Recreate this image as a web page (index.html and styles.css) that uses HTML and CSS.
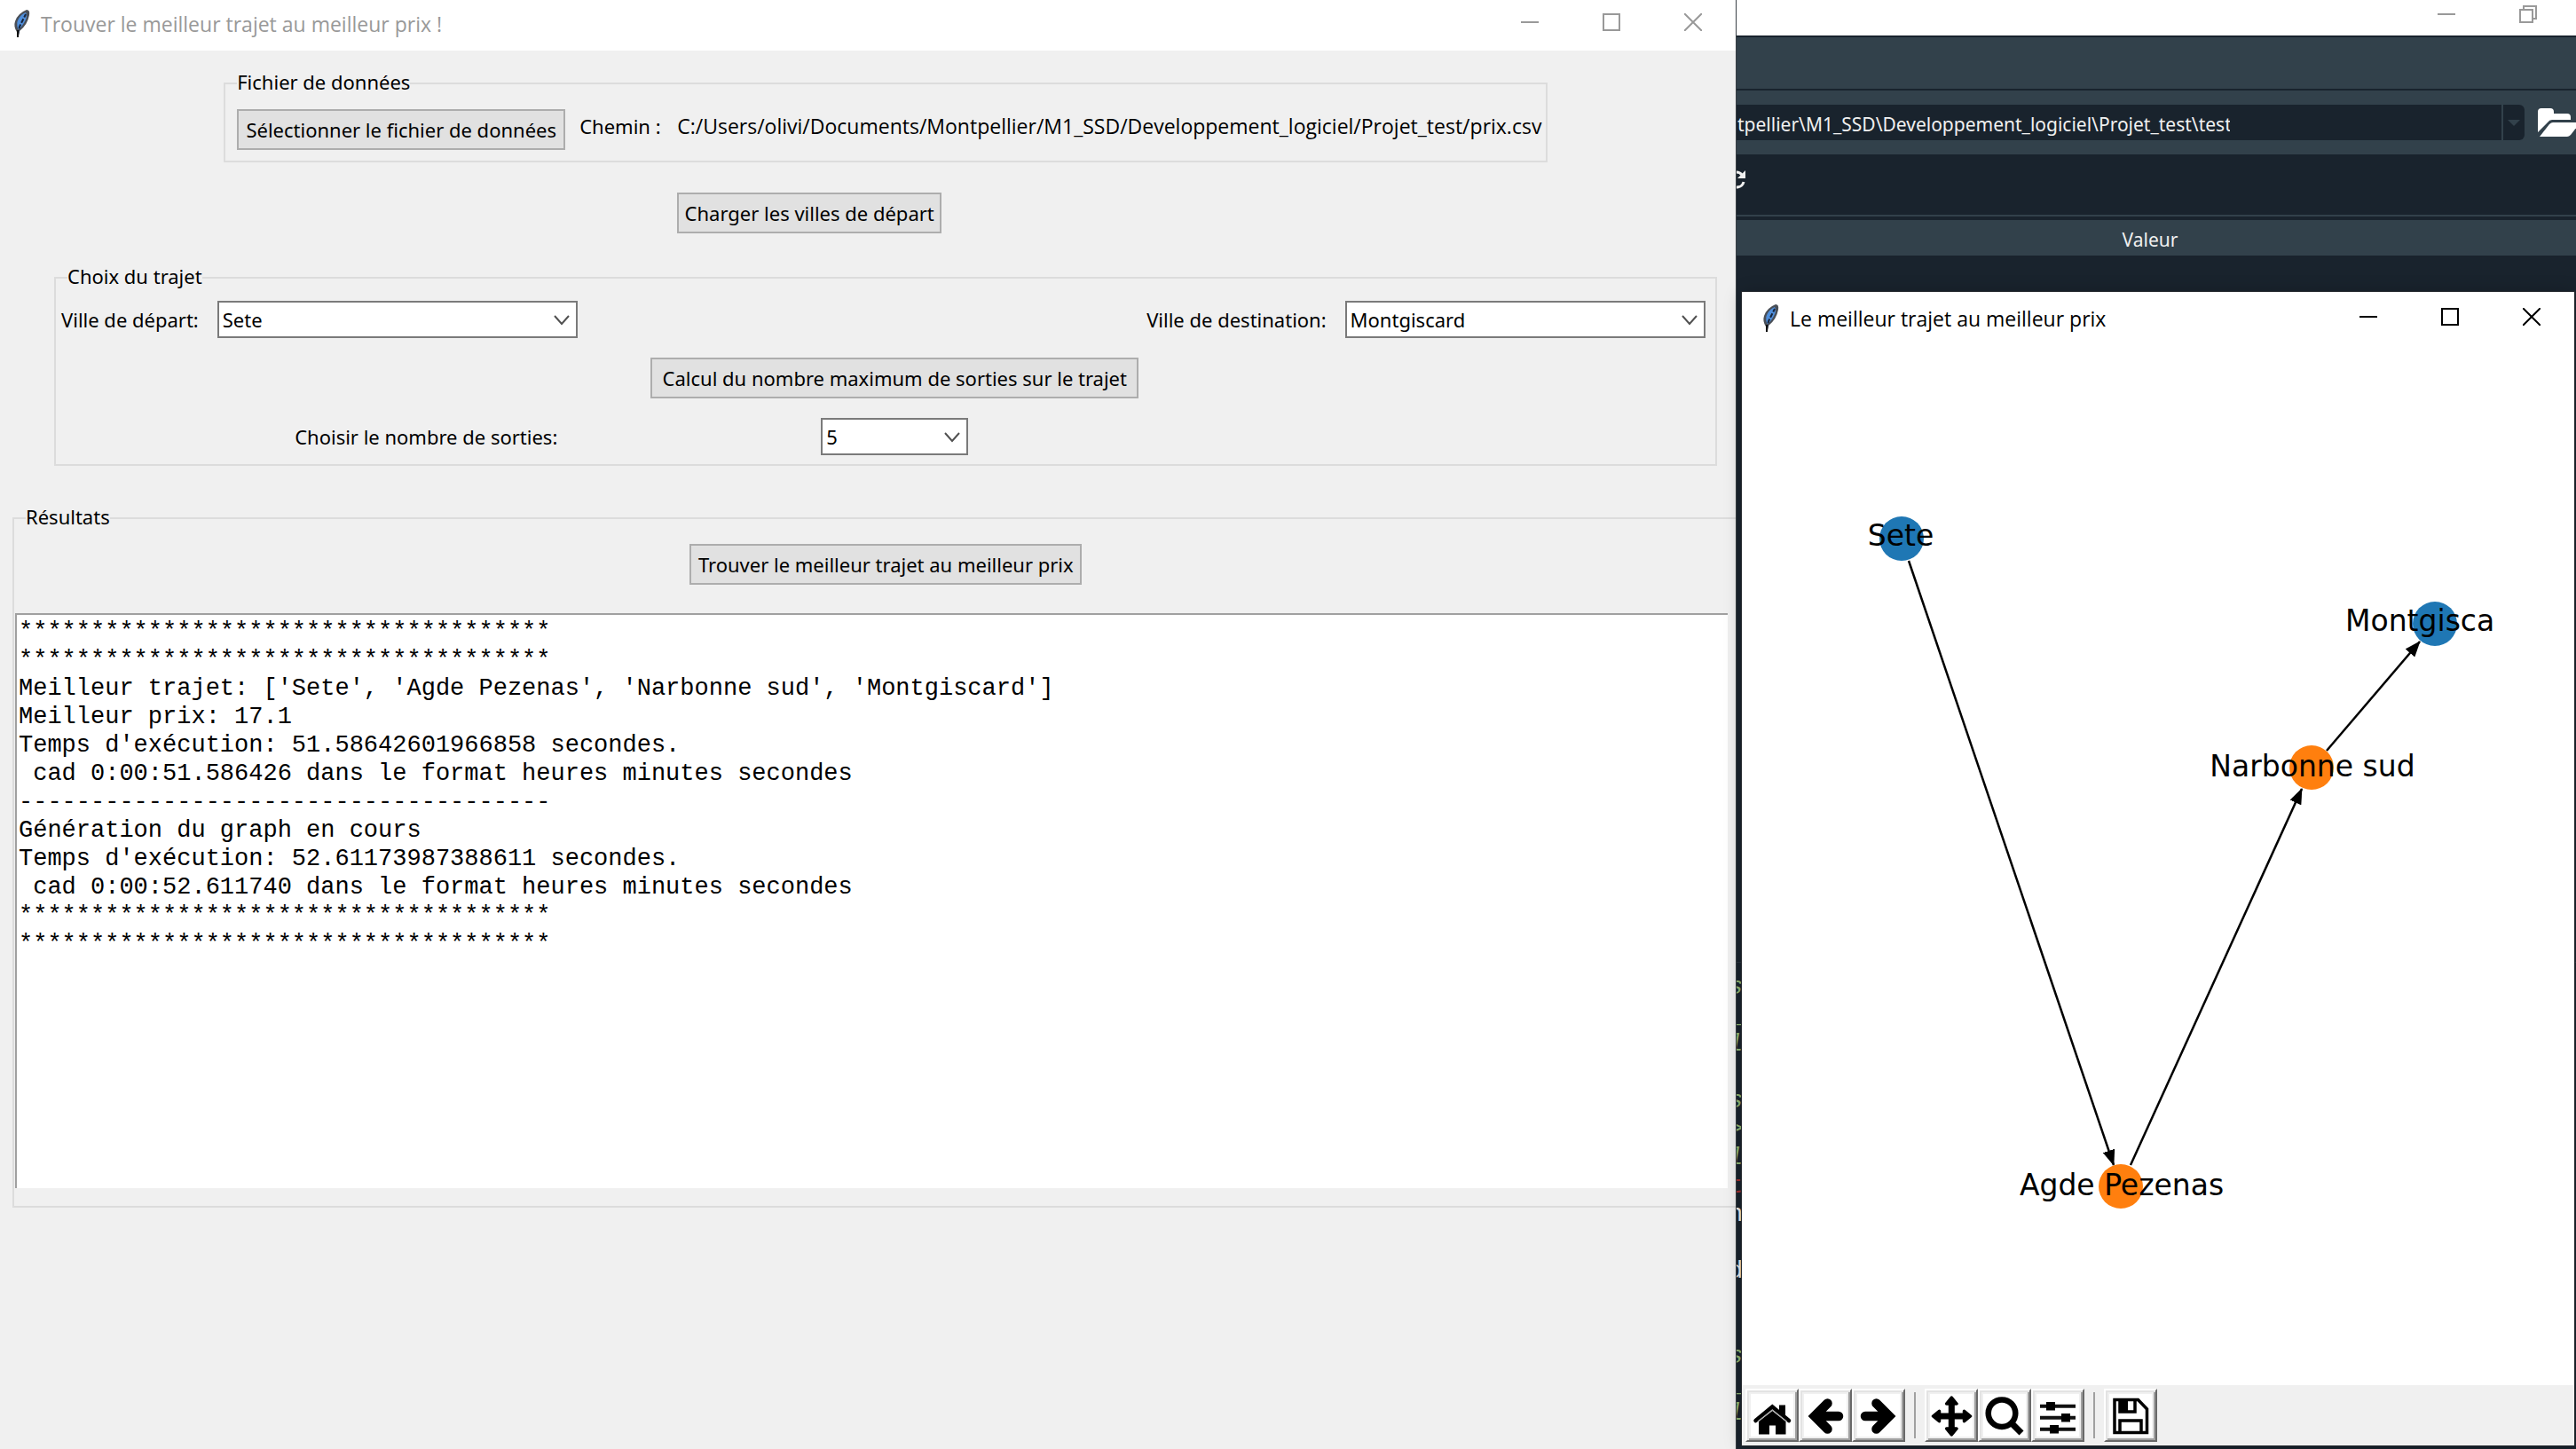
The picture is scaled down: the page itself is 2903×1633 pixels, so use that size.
FILE: index.html
```html
<!DOCTYPE html>
<html lang="fr">
<head>
<meta charset="utf-8">
<title>Trouver le meilleur trajet au meilleur prix !</title>
<link rel="stylesheet" href="styles.css">
</head>
<body>
<svg class="defs" width="0" height="0" aria-hidden="true">
  <symbol id="feather" viewBox="0 0 20 32">
    <path d="M6 31L5 26Q1 20 3 14Q6 5 16 1Q20 1 19 7Q17 18 8 25L7 31Z" fill="#4a4f57"/>
    <path d="M6 22Q4 16 7 11Q10 6 15 4Q17 7 15 12Q12 19 7 23Z" fill="#4f8fdc"/>
    <path d="M6 29L8 20L11 14L15 6" fill="none" stroke="#16233a" stroke-width="2" stroke-dasharray="5 2"/>
    <path d="M6 24L6 32" stroke="#111" stroke-width="2"/>
  </symbol>
  <symbol id="min" viewBox="0 0 20 20"><path d="M0 10H20" stroke="currentColor" stroke-width="2"/></symbol>
  <symbol id="max" viewBox="0 0 20 20"><rect x="1" y="1" width="18" height="18" fill="none" stroke="currentColor" stroke-width="2"/></symbol>
  <symbol id="close" viewBox="0 0 20 20"><path d="M0 0L20 20M20 0L0 20" stroke="currentColor" stroke-width="2"/></symbol>
  <symbol id="restore" viewBox="0 0 20 20"><path d="M1 5H15V19H1ZM5 5V1H19V15H15" fill="none" stroke="currentColor" stroke-width="2"/></symbol>
  <symbol id="chevron" viewBox="0 0 18 12"><path d="M1 1L9 10L17 1" fill="none" stroke="#505050" stroke-width="2"/></symbol>
</svg>

<main class="desktop">
  <section class="ide">
    <header class="ide-title">
      <button aria-label="Réduire"><svg><use href="#min"/></svg></button>
      <button aria-label="Restaurer"><svg><use href="#restore"/></svg></button>
    </header>
    <div class="ide-menu"></div>
    <div class="ide-path">
      <input type="text" aria-label="Répertoire" value="ntpellier\M1_SSD\Developpement_logiciel\Projet_test\test">
      <button class="drop" aria-label="Historique"><svg viewBox="0 0 14 7"><path d="M0 0H14L7 7Z" fill="#32414b"/></svg></button>
      <button class="folder" aria-label="Ouvrir un dossier"><svg viewBox="0 0 50 36"><path d="M1 29V6Q1 2 5 2H15Q19 2 19 6V8H34Q38 8 38 12V15H17Q14 15 12 18Z" fill="#fff"/><path d="M3 34L14 20Q16 18 18 18H49L38 32Q36 34 34 34Z" fill="#fff"/></svg></button>
    </div>
    <div class="ide-tools">
      <button aria-label="Actualiser"><svg viewBox="0 0 24 24"><path d="M4 10A8 8 0 0 1 18 7M20 15A8 8 0 0 1 6 18" fill="none" stroke="#f0f0f0" stroke-width="3"/><path d="M22 2V11H13Z" fill="#f0f0f0"/></svg></button>
    </div>
    <table class="ide-table"><thead><tr><th>Valeur</th></tr></thead></table>
<pre class="code"><i>s</i>
<i>_</i>
<i>l</i>

<i>s</i>
<i>&gt;</i>
<i>l</i>
<b>t</b>
n

d


<i>s</i>
<i>_</i>
<i>l</i></pre>
  </section>

  <section class="window main">
    <header class="titlebar">
      <svg class="app-icon"><use href="#feather"/></svg>
      <h1>Trouver le meilleur trajet au meilleur prix !</h1>
      <button aria-label="Réduire"><svg><use href="#min"/></svg></button>
      <button aria-label="Agrandir"><svg><use href="#max"/></svg></button>
      <button aria-label="Fermer"><svg><use href="#close"/></svg></button>
    </header>
    <form class="content">
      <div class="source">
        <fieldset class="file">
          <legend>Fichier de données</legend>
          <div class="file-row">
            <button type="button" class="btn btn-select">Sélectionner le fichier de données</button>
            <span class="caption">Chemin :</span>
            <output class="path">C:/Users/olivi/Documents/Montpellier/M1_SSD/Developpement_logiciel/Projet_test/prix.csv</output>
          </div>
        </fieldset>
        <button type="button" class="btn btn-load">Charger les villes de départ</button>
      </div>

      <fieldset class="trip">
        <legend>Choix du trajet</legend>
        <div class="cities">
          <div class="field">
            <label for="from">Ville de départ:</label>
            <div class="combo"><select id="from"><option>Sete</option></select><svg><use href="#chevron"/></svg></div>
          </div>
          <div class="field">
            <label for="to">Ville de destination:</label>
            <div class="combo"><select id="to"><option>Montgiscard</option></select><svg><use href="#chevron"/></svg></div>
          </div>
        </div>
        <div class="middle"><button type="button" class="btn btn-calc">Calcul du nombre maximum de sorties sur le trajet</button></div>
        <div class="exits">
          <label for="exits">Choisir le nombre de sorties:</label>
          <div class="combo small"><select id="exits"><option>5</option></select><svg><use href="#chevron"/></svg></div>
        </div>
      </fieldset>

      <fieldset class="results">
        <legend>Résultats</legend>
        <button type="button" class="btn btn-find">Trouver le meilleur trajet au meilleur prix</button>
        <textarea rows="20" readonly aria-label="Résultats">*************************************
*************************************
Meilleur trajet: ['Sete', 'Agde Pezenas', 'Narbonne sud', 'Montgiscard']
Meilleur prix: 17.1
Temps d'exécution: 51.58642601966858 secondes.
 cad 0:00:51.586426 dans le format heures minutes secondes
-------------------------------------
Génération du graph en cours
Temps d'exécution: 52.61173987388611 secondes.
 cad 0:00:52.611740 dans le format heures minutes secondes
*************************************
*************************************</textarea>
      </fieldset>
    </form>
  </section>

  <section class="window popup">
    <header class="titlebar">
      <svg class="app-icon"><use href="#feather"/></svg>
      <h2>Le meilleur trajet au meilleur prix</h2>
      <button aria-label="Réduire"><svg><use href="#min"/></svg></button>
      <button aria-label="Agrandir"><svg><use href="#max"/></svg></button>
      <button aria-label="Fermer"><svg><use href="#close"/></svg></button>
    </header>
    <svg class="graph" viewBox="0 0 938 1172">
      <defs>
        <marker id="arrow" viewBox="0 0 18 14" refX="17" refY="7" markerWidth="18" markerHeight="14" markerUnits="userSpaceOnUse" orient="auto"><path d="M0 0L18 7L0 14Z"/></marker>
      </defs>
      <g stroke="#000" stroke-width="2.5">
        <path d="M188 243L419 924" marker-end="url(#arrow)"/>
        <path d="M438 924L631 500" marker-end="url(#arrow)"/>
        <path d="M659 457L764 334" marker-end="url(#arrow)"/>
      </g>
      <g fill="#1f77b4"><circle cx="180" cy="218" r="25"/><circle cx="781" cy="314" r="25"/></g>
      <g fill="#ff7f0e"><circle cx="642" cy="476" r="25"/><circle cx="427" cy="948" r="25"/></g>
      <text x="179" y="226" text-anchor="middle">Sete</text>
      <text x="680" y="322">Montgisca</text>
      <text x="643" y="486" text-anchor="middle">Narbonne sud</text>
      <text x="428" y="958" text-anchor="middle">Agde Pezenas</text>
    </svg>
    <div class="toolbar">
      <button aria-label="Accueil"><svg viewBox="0 0 48 48"><path d="M32 12.500H39V24H32Z"/><path d="M5.500 30L24.300 14.500L43 30" fill="none" stroke="#000" stroke-width="4.500" stroke-linecap="round"/><path d="M9 31L24.300 19L39.500 31V45.500H28V35.500H21V45.500H9Z"/><path d="M8 31L24.300 18L40.500 31" fill="none" stroke="#aaa" stroke-width="1.300"/></svg></button>
      <button aria-label="Précédent"><svg viewBox="0 0 48 48"><path d="M26.500 10.500L12 25L26.500 39.500M14 25H39" fill="none" stroke="#000" stroke-width="10.500" stroke-linecap="round"/></svg></button>
      <button aria-label="Suivant"><svg viewBox="0 0 48 48"><path d="M21.500 10.500L36 25L21.500 39.500M34 25H9" fill="none" stroke="#000" stroke-width="10.500" stroke-linecap="round"/></svg></button>
      <span class="sep"></span>
      <button aria-label="Déplacer"><svg viewBox="0 0 48 48"><path d="M24.300 8V42M8 25H41" stroke="#000" stroke-width="7"/><path d="M24.300 4L30 11H18.600ZM24.300 46L30 39H18.600ZM3.500 25L10.500 19.300V30.700ZM45.500 25L38.500 19.300V30.700Z" stroke="#000" stroke-width="3.500" stroke-linejoin="round"/></svg></button>
      <button aria-label="Zoom"><svg viewBox="0 0 48 48"><circle cx="21" cy="21.700" r="15.300" fill="none" stroke="#000" stroke-width="6.500"/><path d="M32 33L43 44" stroke="#000" stroke-width="7"/></svg></button>
      <button aria-label="Configurer"><svg viewBox="0 0 48 48"><path d="M4 13.700H44M4 26.700H44M4 39.700H44" stroke="#111" stroke-width="4"/><path d="M11 9H21V18.500H11ZM28 22H38V31.500H28ZM15 35H25V44.500H15Z"/></svg></button>
      <span class="sep"></span>
      <button aria-label="Enregistrer"><svg viewBox="0 0 48 48"><path d="M6 6.500H32.500L42.500 17V43.500H6Z" fill="none" stroke="#000" stroke-width="3.500"/><path d="M12 7V20H29V7M12 43V30H36V43" fill="none" stroke="#000" stroke-width="3.500"/><path d="M11 6H21V20H11Z"/></svg></button>
    </div>
  </section>
</main>
</body>
</html>
```
FILE: styles.css
```css
* { box-sizing: border-box; }

body {
  margin: 0;
  background: #19232d;
  color: #000;
  font: 22px/28px "Noto Sans", "Open Sans", sans-serif;
}

button, input, select, textarea { font: inherit; color: inherit; margin: 0; }
button { border: 0; padding: 0; background: none; }
svg { display: block; }
.defs { position: absolute; }

.desktop { position: relative; min-height: 100vh; overflow: hidden; }

/* editor in the background */
.ide {
  position: absolute;
  left: 67vw; right: 0; top: 0; bottom: 0;
  display: flex;
  flex-direction: column;
  color: #f0f0f0;
  background: #19232d;
  font-size: 21px;
}
.ide-title {
  display: flex;
  justify-content: flex-end;
  height: 40px;
  padding-right: 8px;
  background: #fff;
  color: #999;
}
.ide-title button { width: 92px; height: 32px; display: grid; place-items: center; }
.ide-title svg { width: 20px; height: 20px; }
.ide-menu { height: 62px; background: #32414b; border: solid #19232d; border-width: 2px 0; }
.ide-path { display: flex; height: 72px; padding: 16px 0; background: #32414b; }
.ide-path input {
  flex: 1;
  min-width: 0;
  border: 0;
  padding: 4px 306px 0 0;
  text-align: right;
  background: #19232d;
}
.drop {
  width: 26px;
  display: grid;
  place-items: center;
  background: #19232d;
  border-left: 2px solid #32414b;
  border-radius: 0 6px 6px 0;
}
.drop svg { width: 14px; height: 7px; }
.folder { width: 44px; margin-left: 14px; overflow: hidden; }
.folder svg { width: 50px; height: 36px; }
.ide-tools { height: 70px; padding-top: 16px; border-bottom: 2px solid #32414b; }
.ide-tools svg { width: 24px; height: 24px; }
.ide-table { width: 100%; margin-top: 4px; border-collapse: collapse; background: #32414b; }
.ide-table th { height: 40px; padding: 3px 2px 0 0; font-weight: normal; }
.code {
  margin: auto 0 24px;
  padding: 12px 0 0 3px;
  border-top: 1px solid #2a343c;
  font: 27px/32px "Liberation Mono", monospace;
}
.code i { color: #8fb573; }
.code b { color: #a03030; font-weight: normal; }

/* windows */
.window { position: absolute; display: flex; flex-direction: column; }
.main {
  left: -8px; top: -3px; bottom: 0;
  width: calc(67.4vw + 8px);
  overflow: hidden;
  background: #f0f0f0;
  border-right: 1px solid #3a4045;
}
.popup {
  left: 67.62vw; right: 2px; top: 329px; bottom: 4px;
  background: #fff;
  box-shadow: 0 0 0 1px #23272c, 0 2px 18px rgba(0, 0, 0, .25);
}
.titlebar { display: flex; flex: none; height: 60px; padding: 0 2px 0 22px; background: #fff; }
.main .titlebar { color: #999; }
.app-icon { width: 20px; height: 32px; margin-top: 13px; }
.titlebar h1, .titlebar h2 {
  flex: 1;
  margin: 0 0 0 12px;
  font: 23px/60px "Open Sans", sans-serif;
}
.titlebar button { width: 92px; height: 56px; display: grid; place-items: center; }
.titlebar button svg { width: 20px; height: 20px; }

/* form: wider than the window, which cuts its right edge */
.content {
  display: flex;
  flex-direction: column;
  width: calc(100% + 41px);
  padding: 23px 0 0 8px;
}
fieldset { min-width: 0; margin: 0; padding: 0; border: 2px solid #dcdcdc; }
legend { margin-left: 13px; padding: 0 0 4px; line-height: 24px; }
.btn {
  height: 46px;
  border: 2px solid #adadad;
  background: #e1e1e1;
  white-space: nowrap;
}
.btn-select { width: 370px; }
.btn-load { width: 298px; margin: 34px 0 0 511px; }
.btn-calc { width: 550px; }
.btn-find { width: 442px; }

.source { width: fit-content; margin: 0 auto; }
.file-row { display: flex; padding: 15px 5px 12px 13px; line-height: 38px; white-space: nowrap; }
.caption { width: 95px; margin: 0 15px 0 16px; }
.path { font-family: "Open Sans", sans-serif; font-size: 23px; }

.trip { margin: 36px 62px 0 61px; }
.cities { display: flex; justify-content: space-between; padding: 12px 11px 0 6px; }
.field { display: flex; align-items: center; gap: 21px; }
.combo { position: relative; width: 406px; }
.combo select {
  display: block;
  width: 100%;
  height: 42px;
  padding: 0 4px;
  border: 2px solid #7a7a7a;
  border-radius: 0;
  background: #fff;
  appearance: none;
}
.combo svg { position: absolute; right: 9px; top: 16px; width: 18px; height: 12px; pointer-events: none; }
.small { width: 166px; }
.middle { display: flex; justify-content: center; padding: 22px 0 22px 21px; }
.exits {
  display: grid;
  grid-template-columns: 1fr 166px 1fr;
  align-items: center;
  padding: 0 0 10px 21px;
}
.exits label { justify-self: end; padding-right: 297px; }

.results { margin: 45px 14px 0; text-align: center; }
.results legend { text-align: left; }
.btn-find { margin: 15px 0 32px; }
.results textarea {
  display: block;
  width: calc(100% - 35px);
  margin: 0 0 20px 1px;
  padding: 3px 2px;
  border: solid #a0a0a0;
  border-width: 2px 0 0 2px;
  background: #fff;
  font: 27px/32px "Liberation Mono", monospace;
  resize: none;
  overflow: hidden;
  outline: 0;
}

/* figure */
.graph { flex: 1; min-height: 0; width: 100%; }
.graph text { font: 33px "DejaVu Sans", sans-serif; }
.toolbar { display: flex; flex: none; height: 68px; padding: 4px; background: #f0f0f0; }
.toolbar button {
  width: 60px;
  height: 60px;
  padding: 4px;
  border: 2px solid;
  border-color: #fff #696969 #696969 #fff;
  box-shadow: inset 2px 2px #e3e3e3, inset -2px -2px #a0a0a0;
}
.toolbar button svg { width: 48px; height: 48px; background: #fff; }
.sep { width: 2px; margin: 4px 10px; background: #a0a0a0; }
```
